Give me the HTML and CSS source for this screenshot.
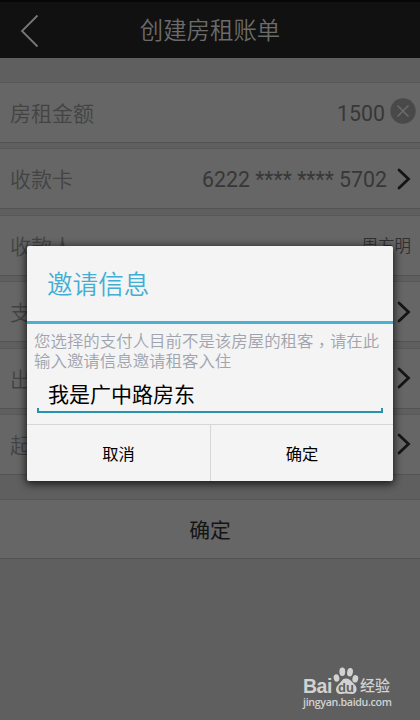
FILE: index.html
```html
<!DOCTYPE html>
<html lang="zh-CN">
<head>
    <meta charset="UTF-8">
    <meta name="viewport" content="width=device-width, initial-scale=1.0">
    <title>创建房租账单</title>
    <link rel="stylesheet" href="styles.css">
</head>
<body>
    <header class="header">
        <svg class="back" width="20" height="34" viewBox="0 0 20 34"><path d="M17.5 1.5L2 17l15.500 15.500"/></svg>
        <h1>创建房租账单</h1>
    </header>

    <main class="form">
        <div class="row">
            <span class="label">房租金额</span>
            <span class="value">1500</span>
            <svg class="clear" width="26" height="26" viewBox="0 0 26 26"><circle cx="13" cy="13" r="12.700"/><path d="M7.500 7.500l11 11M18.500 7.500l-11 11"/></svg>
        </div>
        <div class="row">
            <span class="label">收款卡</span>
            <span class="value">6222 **** **** 5702</span>
            <svg class="arrow" width="14" height="24" viewBox="0 0 14 24"><path d="M2 3l9.500 9L2 21"/></svg>
        </div>
        <div class="row">
            <span class="label">收款人</span>
            <span class="value name">周方明</span>
        </div>
        <div class="row">
            <span class="label">支</span>
            <svg class="arrow" width="14" height="24" viewBox="0 0 14 24"><path d="M2 3l9.500 9L2 21"/></svg>
        </div>
        <div class="row">
            <span class="label">出</span>
            <svg class="arrow" width="14" height="24" viewBox="0 0 14 24"><path d="M2 3l9.500 9L2 21"/></svg>
        </div>
        <div class="row">
            <span class="label">起</span>
            <svg class="arrow" width="14" height="24" viewBox="0 0 14 24"><path d="M2 3l9.500 9L2 21"/></svg>
        </div>
        <button class="submit">确定</button>
    </main>

    <div class="dialog">
        <h2>邀请信息</h2>
        <p>您选择的支付人目前不是该房屋的租客<span class="comma" lang="zh-TW">，</span>请在此<br>输入邀请信息邀请租客入住</p>
        <div class="input">我是广中路房东</div>
        <div class="buttons">
            <button>取消</button>
            <button>确定</button>
        </div>
    </div>

    <div class="watermark">
        <div class="logo">
            <span class="bai">Bai</span>
            <span class="paw">
                <svg width="26" height="28" viewBox="0 0 26 28">
                    <ellipse cx="3.500" cy="11" rx="2.800" ry="3.800" transform="rotate(-12 3.500 11)"/>
                    <ellipse cx="9.300" cy="4.800" rx="2.900" ry="4.200"/>
                    <ellipse cx="17" cy="5.200" rx="2.900" ry="4.200" transform="rotate(10 17 5.200)"/>
                    <ellipse cx="22.300" cy="11.800" rx="2.900" ry="3.700" transform="rotate(12 22.300 11.800)"/>
                    <path d="M13 11.500c-4 0-4.500 3.500-8 6.500-3 2.600-2.800 9 2.500 9 2 0 3.500-.500 5.500-.500s4 .500 6 .500c5 0 5.800-6 3-9-3.500-3.500-5-6.500-9-6.500z"/>
                </svg>
                <b>du</b>
            </span>
            <span class="jingyan">经验</span>
        </div>
        <div class="url">jingyan.baidu.com</div>
    </div>
</body>
</html>
```
FILE: styles.css
```css
* {
    box-sizing: border-box;
}

body {
    margin: 0;
    height: 720px;
    overflow: hidden;
    position: relative;
    background-color: #5f5f5f;
    font-family: Roboto, "Noto Sans CJK SC", sans-serif;
}

button {
    margin: 0;
    padding: 0;
    border: none;
    background: none;
    font-family: inherit;
}

.header {
    display: grid;
    grid-template-columns: 60px 1fr 60px;
    align-items: center;
    height: 58px;
    padding-top: 2px;
    border-top: 2px solid #070707;
    background-color: #111;
}

.header h1 {
    margin: 0;
    color: #6b6b6b;
    font-size: 23.400px;
    font-weight: 350;
    line-height: 34px;
    text-align: center;
}

.back {
    margin-left: 20px;
    fill: none;
    stroke: #777;
    stroke-width: 1.800;
}

.form {
    display: flex;
    flex-direction: column;
    gap: 5.400px;
    padding-top: 24px;
}

.row {
    display: flex;
    align-items: center;
    height: 61px;
    padding: 0 9px 0 10px;
    border-top: 1px solid #585858;
    border-bottom: 1px solid #535353;
    background-color: #666;
}

.label {
    flex: 1;
    padding-bottom: 1px;
    color: #434343;
    font-size: 21px;
    font-weight: 350;
}

.value {
    padding-top: 1px;
    color: #373737;
    font-size: 21.300px;
}

.value.name {
    padding: 0 0 1px;
    color: #303030;
    font-size: 16.500px;
    font-weight: 350;
}

.clear {
    margin: -3px -5px 0 5px;
    fill: #494949;
}

.clear path {
    stroke: #6b6b6b;
    stroke-width: 1.500;
}

.arrow {
    margin-left: 10px;
    fill: none;
    stroke: #151515;
    stroke-width: 2.800;
    stroke-linecap: round;
}

.submit {
    height: 60px;
    margin-top: 19px;
    border-top: 1px solid #585858;
    border-bottom: 1px solid #535353;
    background-color: #666;
    color: #151515;
    font-size: 20.800px;
}

.dialog {
    position: absolute;
    left: 27px;
    top: 246px;
    width: 366px;
    height: 235px;
    border-radius: 2px;
    background-color: #f4f4f4;
    box-shadow: 0 2px 8px 1px rgba(0, 0, 0, 0.750);
}

.dialog h2 {
    height: 78px;
    margin: 0;
    padding: 2px 0 0 20px;
    border-bottom: 3px solid #4bb1d2;
    color: #43aed3;
    font-size: 25.600px;
    font-weight: 350;
    line-height: 75px;
}

.dialog p {
    height: 49px;
    margin: 0;
    padding: 8px 0 0 7px;
    color: #a0a4ae;
    font-size: 16.450px;
    font-weight: 350;
    line-height: 20px;
    white-space: nowrap;
}

.comma {
    font-family: "Noto Sans CJK TC", sans-serif;
    line-height: 0;
    vertical-align: -4px;
}

.input {
    height: 36px;
    margin: 4px 10px 0;
    padding-left: 11px;
    color: #000;
    font-size: 21px;
    line-height: 37px;
    background: linear-gradient(#2893ad, #2893ad) left bottom / 100% 2px no-repeat,
        linear-gradient(#2893ad, #2893ad) left bottom / 2px 5px no-repeat,
        linear-gradient(#2893ad, #2893ad) right bottom / 2px 5px no-repeat;
}

.buttons {
    display: grid;
    grid-template-columns: 1fr 1fr;
    height: 57px;
    margin-top: 11px;
    border-top: 1px solid #d6d6d6;
}

.buttons button {
    color: #000;
    font-size: 16.300px;
}

.buttons button + button {
    border-left: 1px solid #d6d6d6;
}

.watermark {
    position: absolute;
    left: 303px;
    top: 666px;
    color: #d2d2d2;
}

.logo {
    display: flex;
    align-items: flex-end;
    height: 29px;
}

.bai {
    width: 28px;
    font: bold 19.500px/22px "Liberation Sans", sans-serif;
    letter-spacing: -0.500px;
    transform: translateY(2px);
}

.paw {
    display: grid;
    margin-left: 2px;
    fill: #d2d2d2;
}

.paw svg,
.paw b {
    grid-area: 1 / 1;
}

.paw b {
    align-self: end;
    color: #5f5f5f;
    font: bold 13px/14px "Liberation Sans", sans-serif;
    text-align: center;
}

.jingyan {
    margin-left: 1px;
    font-size: 15px;
    font-weight: 500;
    line-height: 17px;
}

.url {
    font: 600 10.700px/15px "Open Sans", sans-serif;
    letter-spacing: -0.350px;
}
```
